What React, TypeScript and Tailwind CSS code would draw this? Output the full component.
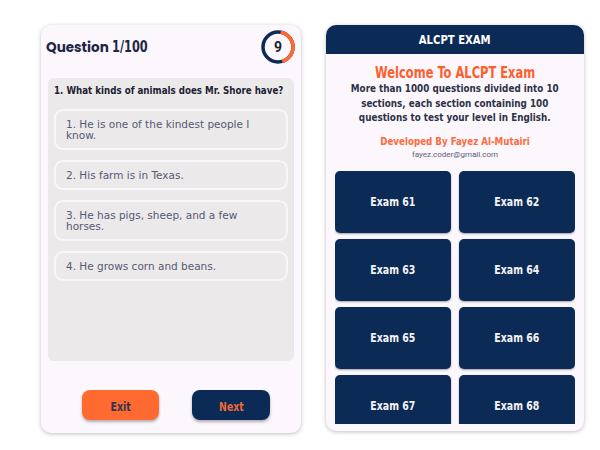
import React from "react";

const options = [
  "1. He is one of the kindest people I know.",
  "2. His farm is in Texas.",
  "3. He has pigs, sheep, and a few horses.",
  "4. He grows corn and beans.",
];

const exams = [61, 62, 63, 64, 65, 66, 67, 68];

function Timer() {
  return (
    <div className="relative flex h-[36px] w-[36px] items-center justify-center">
      <svg width="36" height="36" viewBox="0 0 36 36" className="absolute inset-0">
        <circle cx="18" cy="18" r="15" fill="none" stroke="#0c2a56" strokeWidth="3.5" />
        <circle
          cx="18"
          cy="18"
          r="15"
          fill="none"
          stroke="#ff6a30"
          strokeWidth="3.5"
          strokeDasharray="40 94.25"
          transform="rotate(-80 18 18)"
        />
      </svg>
      <span className="relative font-['Roboto',sans-serif] text-[14px] font-bold text-[#1b1f33]">9</span>
    </div>
  );
}

function QuizCard() {
  return (
    <div className="flex h-[408px] w-[260px] flex-col rounded-[10px] bg-[#fcf6fd] shadow-[0_1px_4px_rgba(0,0,0,0.25)]">
      <div className="flex items-center justify-between pl-[5px] pr-[5px] pt-[4px]">
        <div className="flex items-baseline gap-[3px] text-[#1c2645]">
          <span className="font-['Poppins','Open_Sans',sans-serif] text-[13.5px] font-bold">Question</span>
          <span className="inline-block origin-left scale-x-[0.84] font-['DejaVu_Sans_Condensed','Liberation_Sans_Narrow',sans-serif] text-[15px] font-bold">
            1/100
          </span>
        </div>
        <Timer />
      </div>
      <div className="mx-[7px] mt-[13px] flex h-[283px] flex-col rounded-[6px] bg-[#ebe9ea] px-[6px] pt-[6px]">
        <p className="inline-block origin-left scale-x-[0.88] whitespace-nowrap font-['DejaVu_Sans_Condensed','Liberation_Sans_Narrow',sans-serif] text-[11px] font-bold leading-[14px] text-[#1e2233]">
          1. What kinds of animals does Mr. Shore have?
        </p>
        <div className="mt-[11px] flex flex-col gap-[10px]">
          {options.map((o) => (
            <div
              key={o}
              className="rounded-[9px] border-2 border-[#f8f6f8] py-[7.5px] pl-[10px] pr-[12px] font-['DejaVu_Sans',sans-serif] text-[10.5px] leading-[11px] text-[#565a74]"
            >
              {o}
            </div>
          ))}
        </div>
      </div>
      <div className="mt-[29px] flex justify-center gap-[33px] pl-[10px]">
        <button className="h-[30px] w-[77px] rounded-[8px] bg-[#ff6a30] text-[#2f3454] shadow-[0_2px_3px_rgba(0,0,0,0.3)]">
          <span className="inline-block scale-x-[0.8] font-['DejaVu_Sans_Condensed','Liberation_Sans_Narrow',sans-serif] text-[13px] font-bold">
            Exit
          </span>
        </button>
        <button className="h-[30px] w-[78px] rounded-[8px] bg-[#0c2a56] text-[#f0683a] shadow-[0_2px_3px_rgba(0,0,0,0.3)]">
          <span className="inline-block scale-x-[0.8] font-['DejaVu_Sans_Condensed','Liberation_Sans_Narrow',sans-serif] text-[13px] font-bold">
            Next
          </span>
        </button>
      </div>
    </div>
  );
}

function ExamCard() {
  return (
    <div className="flex h-[406px] w-[258px] flex-col overflow-hidden rounded-[10px] bg-[#fcf6fd] shadow-[0_1px_4px_rgba(0,0,0,0.25)]">
      <div className="flex h-[29px] items-center justify-center bg-[#0c2a56] text-white">
        <span className="inline-block scale-x-[0.86] font-['DejaVu_Sans_Condensed','Liberation_Sans_Narrow',sans-serif] text-[13px] font-bold">
          ALCPT EXAM
        </span>
      </div>
      <div className="flex flex-col items-center text-center font-['DejaVu_Sans_Condensed','Liberation_Sans_Narrow',sans-serif] font-bold">
        <p className="mt-[11px] inline-block scale-x-[0.85] whitespace-nowrap text-[15px] leading-[17px] text-[#ff5e2e]">
          Welcome To ALCPT Exam
        </p>
        <p className="inline-block scale-x-[0.89] whitespace-nowrap text-[11px] leading-[14.5px] text-[#2c3145]">
          More than 1000 questions divided into 10
          <br />
          sections, each section containing 100
          <br />
          questions to test your level in English.
        </p>
        <p className="mt-[9px] inline-block scale-x-[0.88] whitespace-nowrap text-[11px] leading-[13px] text-[#ff6a3a]">
          Developed By Fayez Al-Mutairi
        </p>
        <p className="font-['Roboto',sans-serif] text-[8px] font-normal leading-[14px] text-[#5b5f73]">fayez.coder@gmail.com</p>
      </div>
      <div className="mx-[9px] mb-[7px] mt-[9px] min-h-0 flex-1 overflow-hidden">
        <div className="grid grid-cols-2 gap-x-[8px] gap-y-[6px]">
          {exams.map((n) => (
            <div
              key={n}
              className="flex h-[62px] items-center justify-center rounded-[5px] bg-[#0c2a56] text-[#f4f4f6] shadow-[0_1px_2px_rgba(0,0,0,0.35)]"
            >
              <span className="inline-block scale-x-[0.87] font-['DejaVu_Sans_Condensed','Liberation_Sans_Narrow',sans-serif] text-[12px] font-bold">
                Exam {n}
              </span>
            </div>
          ))}
        </div>
      </div>
    </div>
  );
}

export default function App() {
  return (
    <div className="flex h-[450px] w-[600px] items-start gap-[25px] bg-white pl-[41px] pt-[25px]">
      <QuizCard />
      <ExamCard />
    </div>
  );
}
